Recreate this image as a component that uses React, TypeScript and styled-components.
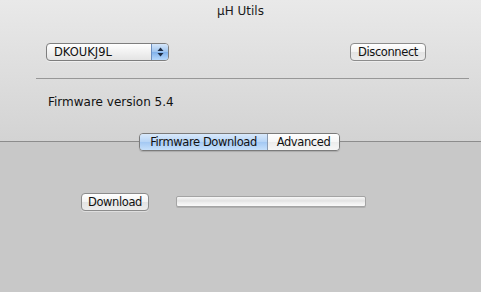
import React from 'react';
import styled, { createGlobalStyle } from 'styled-components';

const GlobalStyle = createGlobalStyle`
  html, body {
    margin: 0;
    padding: 0;
  }
  body {
    width: 481px;
    height: 292px;
    overflow: hidden;
    font-family: "DejaVu Sans", "Liberation Sans", sans-serif;
    font-size: 12px;
    color: #111;
  }
`;

const Window = styled.div`
  width: 481px;
  height: 292px;
  display: flex;
  flex-direction: column;
  background: #c8c8c8;
`;

const TopPanel = styled.div`
  height: 141px;
  display: flex;
  flex-direction: column;
  background: linear-gradient(#e9e9e9, #d3d3d3);
`;

const TitleBar = styled.div`
  height: 22px;
  display: flex;
  align-items: center;
  justify-content: center;
  font-size: 12px;
  color: #1a1a1a;
`;

const DeviceRow = styled.div`
  margin-top: 21px;
  padding: 0 55px 0 46px;
  display: flex;
  justify-content: space-between;
  align-items: flex-start;
`;

const Popup = styled.div`
  box-sizing: border-box;
  width: 123px;
  height: 18px;
  display: flex;
  align-items: stretch;
  border: 1px solid #7e7e7e;
  border-radius: 4px;
  overflow: hidden;
  background: linear-gradient(#ffffff, #f1f1f1 50%, #e4e4e4);
  box-shadow: 0 1px 0 rgba(255, 255, 255, 0.5);
`;

const PopupLabel = styled.span`
  flex: 1;
  padding-left: 7px;
  font-size: 11.5px;
  line-height: 16px;
`;

const PopupArrows = styled.span`
  width: 16px;
  border-left: 1px solid #6d8fbf;
  background: linear-gradient(#d5e6fa, #9ec4ef 50%, #80b1eb 51%, #b7d8fb);
  display: flex;
  align-items: center;
  justify-content: center;
`;

const PushButton = styled.button<{ $width: number }>`
  box-sizing: border-box;
  width: ${(p) => p.$width}px;
  height: 18px;
  padding: 0;
  margin: 0;
  border: 1px solid #8c8c8c;
  border-radius: 4px;
  background: linear-gradient(#ffffff, #f2f2f2 50%, #e3e3e3 51%, #ececec);
  box-shadow: 0 1px 0 rgba(255, 255, 255, 0.4);
  font-family: inherit;
  font-size: 11.5px;
  letter-spacing: -0.4px;
  color: #111;
  line-height: 16px;
`;

const Separator = styled.div`
  margin: 17px 12px 0 36px;
  height: 1px;
  background: #979797;
`;

const InfoText = styled.div`
  margin: 16px 0 0 48px;
  font-size: 12px;
  line-height: 15px;
`;

const TabStrip = styled.div`
  position: relative;
  height: 0;
  display: flex;
  justify-content: center;
  &::before {
    content: "";
    position: absolute;
    left: 0;
    right: 0;
    top: 0;
    height: 1px;
    background: #8c8c8c;
  }
`;

const Segmented = styled.div`
  position: relative;
  margin-top: -8px;
  margin-right: 2px;
  box-sizing: border-box;
  height: 18px;
  display: flex;
  border: 1px solid #7b7b7b;
  border-radius: 4px;
  overflow: hidden;
  box-shadow: 0 1px 1px rgba(0, 0, 0, 0.15);
`;

const Segment = styled.div<{ $selected?: boolean; $width: number }>`
  width: ${(p) => p.$width}px;
  display: flex;
  align-items: center;
  justify-content: center;
  font-size: 11.5px;
  letter-spacing: -0.4px;
  line-height: 16px;
  background: ${(p) =>
    p.$selected
      ? 'linear-gradient(#d9e9fb, #b6d4f6 50%, #a3c8f3 51%, #c6e0fb)'
      : 'linear-gradient(#ffffff, #f6f6f6 50%, #ececec 51%, #f7f7f7)'};
  & + & {
    border-left: 1px solid #8a9bb2;
  }
`;

const BottomPanel = styled.div`
  flex: 1;
  display: flex;
  align-items: flex-start;
  padding: 52px 0 0 81px;
  gap: 27px;
`;

const Progress = styled.div`
  margin-top: 3px;
  box-sizing: border-box;
  width: 190px;
  height: 11px;
  border: 1px solid #a4a4a4;
  border-radius: 2px;
  background: linear-gradient(#f8f8f8, #e2e2e2 45%, #ececec 55%, #fafafa);
  box-shadow: 0 1px 0 rgba(0, 0, 0, 0.12);
`;

const App = () => {
  return (
    <Window>
      <GlobalStyle />
      <TopPanel>
        <TitleBar>µH Utils</TitleBar>
        <DeviceRow>
          <Popup>
            <PopupLabel>DKOUKJ9L</PopupLabel>
            <PopupArrows>
              <svg width="7" height="10" viewBox="0 0 7 10">
                <path d="M3.5 0.5 L6.5 4 L0.5 4 Z" fill="#1d2c44" />
                <path d="M3.5 9.5 L6.5 6 L0.5 6 Z" fill="#1d2c44" />
              </svg>
            </PopupArrows>
          </Popup>
          <PushButton $width={76}>Disconnect</PushButton>
        </DeviceRow>
        <Separator />
        <InfoText>Firmware version 5.4</InfoText>
      </TopPanel>
      <TabStrip>
        <Segmented>
          <Segment $selected $width={127}>Firmware Download</Segment>
          <Segment $width={71}>Advanced</Segment>
        </Segmented>
      </TabStrip>
      <BottomPanel>
        <PushButton $width={68}>Download</PushButton>
        <Progress />
      </BottomPanel>
    </Window>
  );
};

export default App;
